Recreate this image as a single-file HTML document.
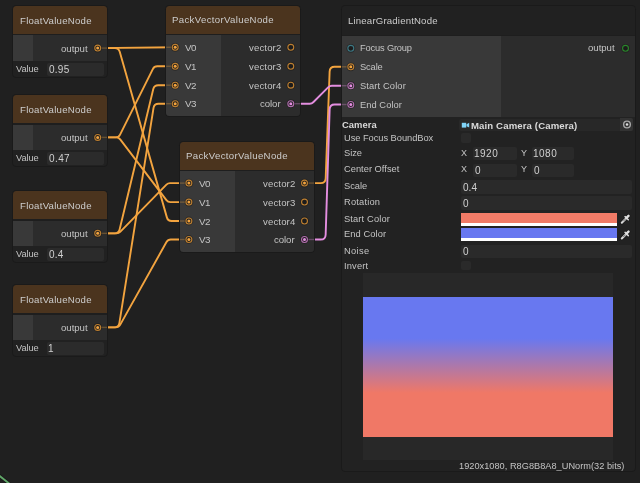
<!DOCTYPE html>
<html><head><meta charset="utf-8"><style>*{margin:0;padding:0;box-sizing:border-box}
html,body{width:640px;height:483px;overflow:hidden;background:#202020;font-family:"Liberation Sans",sans-serif;color:#c4c4c4}
.a{position:absolute}
.node{position:absolute;border-radius:3.5px;overflow:hidden;background:#232323;box-shadow:0 0 0 1px #1a1a1a}
.hdr{position:absolute;left:0;right:0;top:0;background:#4b341e}
.t{position:absolute;font-size:10px;line-height:12px;white-space:nowrap;color:#c8c8c8;will-change:transform}
.fld{position:absolute;background:#2a2a2a;border-radius:2px}
svg{position:absolute;left:0;top:0}
</style></head><body>
<svg width="640" height="483"><g fill="none" stroke-width="1.9"><path d="M97.70 48.10 L175.20 47.30" stroke="#f3a43f"/><path d="M97.70 48.10 L114.92 48.10 Q118.70 48.10 119.73 51.73 L166.87 217.37 Q167.90 221.00 171.68 221.00 L188.90 221.00" stroke="#f3a43f"/><path d="M97.70 137.40 L115.61 137.40 Q118.70 137.40 120.08 134.63 L152.82 69.07 Q154.20 66.30 157.29 66.30 L175.20 66.30" stroke="#f3a43f"/><path d="M97.70 137.40 L116.22 137.40 Q118.70 137.40 120.20 139.37 L166.40 200.13 Q167.90 202.10 170.38 202.10 L188.90 202.10" stroke="#f3a43f"/><path d="M97.70 233.35 L114.76 233.35 Q118.70 233.35 119.62 229.52 L153.28 89.03 Q154.20 85.20 158.14 85.20 L175.20 85.20" stroke="#f3a43f"/><path d="M97.70 233.35 L116.60 233.35 Q118.70 233.35 120.17 231.85 L166.43 184.60 Q167.90 183.10 170.00 183.10 L188.90 183.10" stroke="#f3a43f"/><path d="M97.70 327.40 L114.43 327.40 Q118.70 327.40 119.37 323.18 L153.53 107.92 Q154.20 103.70 158.47 103.70 L175.20 103.70" stroke="#f3a43f"/><path d="M97.70 327.40 L115.77 327.40 Q118.70 327.40 120.13 324.84 L166.47 242.06 Q167.90 239.50 170.83 239.50 L188.90 239.50" stroke="#f3a43f"/><path d="M304.50 183.10 L320.68 183.10 Q325.50 183.10 325.68 178.28 L329.62 71.62 Q329.80 66.80 334.62 66.80 L350.80 66.80" stroke="#f3a43f"/><path d="M290.80 103.70 L309.73 103.70 Q311.80 103.70 313.26 102.24 L328.34 87.16 Q329.80 85.70 331.87 85.70 L350.80 85.70" stroke="#e48ee0"/><path d="M304.50 239.50 L320.66 239.50 Q325.50 239.50 325.65 234.66 L329.65 109.34 Q329.80 104.50 334.64 104.50 L350.80 104.50" stroke="#e48ee0"/></g></svg>
<div class="node" style="left:12.8px;top:6.10px;width:94.20px;height:70.70px;background:#212121"><div class="hdr" style="height:27.80px"></div><div class="a" style="left:0;top:27.80px;right:0;height:1.4px;background:#1e1e1e"></div><div class="a" style="left:0;top:29.20px;width:20.3px;height:25.6px;background:#393939"></div><div class="a" style="left:20.3px;top:29.20px;right:0;height:25.6px;background:#2c2c2c"></div></div><div class="fld" style="left:46.90px;top:62.70px;width:56.90px;height:13.10px;background:#2b2b2b"></div><div class="node" style="left:12.8px;top:95.40px;width:94.20px;height:70.70px;background:#212121"><div class="hdr" style="height:27.80px"></div><div class="a" style="left:0;top:27.80px;right:0;height:1.4px;background:#1e1e1e"></div><div class="a" style="left:0;top:29.20px;width:20.3px;height:25.6px;background:#393939"></div><div class="a" style="left:20.3px;top:29.20px;right:0;height:25.6px;background:#2c2c2c"></div></div><div class="fld" style="left:46.90px;top:152.00px;width:56.90px;height:13.10px;background:#2b2b2b"></div><div class="node" style="left:12.8px;top:191.35px;width:94.20px;height:70.70px;background:#212121"><div class="hdr" style="height:27.80px"></div><div class="a" style="left:0;top:27.80px;right:0;height:1.4px;background:#1e1e1e"></div><div class="a" style="left:0;top:29.20px;width:20.3px;height:25.6px;background:#393939"></div><div class="a" style="left:20.3px;top:29.20px;right:0;height:25.6px;background:#2c2c2c"></div></div><div class="fld" style="left:46.90px;top:247.95px;width:56.90px;height:13.10px;background:#2b2b2b"></div><div class="node" style="left:12.8px;top:285.40px;width:94.20px;height:70.70px;background:#212121"><div class="hdr" style="height:27.80px"></div><div class="a" style="left:0;top:27.80px;right:0;height:1.4px;background:#1e1e1e"></div><div class="a" style="left:0;top:29.20px;width:20.3px;height:25.6px;background:#393939"></div><div class="a" style="left:20.3px;top:29.20px;right:0;height:25.6px;background:#2c2c2c"></div></div><div class="fld" style="left:46.90px;top:342.00px;width:56.90px;height:13.10px;background:#2b2b2b"></div><div class="node" style="left:166.2px;top:6.20px;width:134.3px;height:109.50px"><div class="hdr" style="height:27.70px"></div><div class="a" style="left:0;top:27.70px;right:0;height:1.2px;background:#1e1e1e"></div><div class="a" style="left:0;top:28.90px;width:55.3px;bottom:0;background:#393939"></div><div class="a" style="left:55.3px;top:28.90px;right:0;bottom:0;background:#2c2c2c"></div></div><div class="node" style="left:179.9px;top:142.00px;width:134.3px;height:109.50px"><div class="hdr" style="height:27.70px"></div><div class="a" style="left:0;top:27.70px;right:0;height:1.2px;background:#1e1e1e"></div><div class="a" style="left:0;top:28.90px;width:55.3px;bottom:0;background:#393939"></div><div class="a" style="left:55.3px;top:28.90px;right:0;bottom:0;background:#2c2c2c"></div></div>
<div class="node" style="left:341.6px;top:6.2px;width:293.60px;height:464.80px;background:#222222"><div class="a" style="left:0;top:0;right:0;height:28.9px;background:#212121"></div><div class="a" style="left:0;top:28.9px;right:0;height:0.8px;background:#1e1e1e"></div><div class="a" style="left:0;top:29.7px;width:159.10px;height:81.3px;background:#393939"></div><div class="a" style="left:159.10px;top:29.7px;right:0;height:81.3px;background:#2c2c2c"></div></div><div class="fld" style="left:459.00px;top:118.60px;width:174.40px;height:12.30px;background:#282828"></div><div class="a" style="left:619.6px;top:118.2px;width:13.9px;height:12.6px;background:#333333;border-radius:0 2px 2px 0"></div><svg width="640" height="483"><circle cx="627" cy="124.5" r="3.35" fill="none" stroke="#a8a8a8" stroke-width="1.4"/><circle cx="627" cy="124.5" r="1.25" fill="#e0e0e0"/></svg><svg width="640" height="483"><rect x="461.8" y="122.8" width="4.4" height="4.8" fill="#80d4f8"/><path d="M466.5 124.3 L469.2 122.8 L469.2 127.6 L466.5 126.2 Z" fill="#80d4f8"/></svg><div class="a" style="left:461.10px;top:133.20px;width:10.10px;height:9.40px;background:#2a2a2a;border-radius:2px"></div><div class="fld" style="left:473.20px;top:146.80px;width:43.50px;height:13.30px;background:#2a2a2a"></div><div class="fld" style="left:532.20px;top:146.80px;width:41.80px;height:13.30px;background:#2a2a2a"></div><div class="fld" style="left:473.20px;top:164.20px;width:43.50px;height:12.80px;background:#2a2a2a"></div><div class="fld" style="left:532.20px;top:164.20px;width:41.80px;height:12.80px;background:#2a2a2a"></div><div class="fld" style="left:461.20px;top:180.20px;width:170.80px;height:14.00px;background:#2a2a2a"></div><div class="fld" style="left:461.20px;top:195.70px;width:170.80px;height:14.00px;background:#2a2a2a"></div><div class="a" style="left:460.80px;top:212.90px;width:156.50px;height:10.10px;background:#f07a66;"></div><div class="a" style="left:460.80px;top:223.00px;width:156.50px;height:2.70px;background:#ffffff;"></div><div class="a" style="left:460.80px;top:228.40px;width:156.50px;height:9.70px;background:#6878f0;"></div><div class="a" style="left:460.80px;top:238.10px;width:156.50px;height:3.10px;background:#ffffff;"></div><div class="fld" style="left:461.20px;top:245.00px;width:170.80px;height:12.80px;background:#2a2a2a"></div><div class="a" style="left:461.20px;top:261.00px;width:9.90px;height:9.20px;background:#2a2a2a;border-radius:2px"></div><svg width="640" height="483"><g stroke-linecap="round" fill="none"><path d="M621.8 222.70 L626.0 218.50" stroke="#111" stroke-opacity="0.6" stroke-width="3.4"/><path d="M625.1 216.60 L628.3 219.80" stroke="#111" stroke-opacity="0.6" stroke-width="2.8"/><path d="M626.7 217.60 L628.5 215.90" stroke="#111" stroke-opacity="0.6" stroke-width="3.6"/><path d="M621.8 222.70 L626.0 218.50" stroke="#d8d8d8" stroke-width="2.1"/><path d="M623.6 220.90 L625.4 219.10" stroke="#3a3a3a" stroke-width="0.7"/><path d="M625.1 216.60 L628.3 219.80" stroke="#d8d8d8" stroke-width="1.6"/><path d="M626.7 217.60 L628.5 215.90" stroke="#e0e0e0" stroke-width="2.5"/></g></svg><svg width="640" height="483"><g stroke-linecap="round" fill="none"><path d="M621.8 238.50 L626.0 234.30" stroke="#111" stroke-opacity="0.6" stroke-width="3.4"/><path d="M625.1 232.40 L628.3 235.60" stroke="#111" stroke-opacity="0.6" stroke-width="2.8"/><path d="M626.7 233.40 L628.5 231.70" stroke="#111" stroke-opacity="0.6" stroke-width="3.6"/><path d="M621.8 238.50 L626.0 234.30" stroke="#d8d8d8" stroke-width="2.1"/><path d="M623.6 236.70 L625.4 234.90" stroke="#3a3a3a" stroke-width="0.7"/><path d="M625.1 232.40 L628.3 235.60" stroke="#d8d8d8" stroke-width="1.6"/><path d="M626.7 233.40 L628.5 231.70" stroke="#e0e0e0" stroke-width="2.5"/></g></svg><div class="a" style="left:363.20px;top:273.25px;width:249.80px;height:186.95px;background:#282828;"></div><div class="a" style="left:363.2px;top:296.6px;width:249.8px;height:140.2px;background:linear-gradient(to bottom,#6878f0 0%,#6878f0 29.5%,#f07866 68.5%,#f07866 100%)"></div>
<div class="t" style="left:20.00px;top:15px;font-size:9.6px;color:#cdcdcd;letter-spacing:0.265px;">FloatValueNode</div><div class="t" style="left:60.50px;top:43px;font-size:9.6px;color:#c4c4c4;letter-spacing:-0.02px;">output</div><div class="t" style="left:16.00px;top:63px;font-size:9.3px;color:#c4c4c4;letter-spacing:-0.075px;">Value</div><div class="t" style="left:48.90px;top:64px;font-size:10px;color:#d0d0d0;letter-spacing:0.267px;">0.95</div><div class="t" style="left:20.00px;top:104px;font-size:9.6px;color:#cdcdcd;letter-spacing:0.265px;">FloatValueNode</div><div class="t" style="left:60.50px;top:132px;font-size:9.6px;color:#c4c4c4;letter-spacing:-0.02px;">output</div><div class="t" style="left:16.00px;top:152px;font-size:9.3px;color:#c4c4c4;letter-spacing:-0.075px;">Value</div><div class="t" style="left:48.90px;top:153px;font-size:10px;color:#d0d0d0;letter-spacing:0.4px;">0.47</div><div class="t" style="left:20.00px;top:200px;font-size:9.6px;color:#cdcdcd;letter-spacing:0.265px;">FloatValueNode</div><div class="t" style="left:60.50px;top:228px;font-size:9.6px;color:#c4c4c4;letter-spacing:-0.02px;">output</div><div class="t" style="left:16.00px;top:248px;font-size:9.3px;color:#c4c4c4;letter-spacing:-0.075px;">Value</div><div class="t" style="left:48.90px;top:249px;font-size:10px;color:#d0d0d0;letter-spacing:0.2px;">0.4</div><div class="t" style="left:20.00px;top:294px;font-size:9.6px;color:#cdcdcd;letter-spacing:0.265px;">FloatValueNode</div><div class="t" style="left:60.50px;top:322px;font-size:9.6px;color:#c4c4c4;letter-spacing:-0.02px;">output</div><div class="t" style="left:16.00px;top:342px;font-size:9.3px;color:#c4c4c4;letter-spacing:-0.075px;">Value</div><div class="t" style="left:47.90px;top:343px;font-size:10px;color:#d0d0d0;">1</div><div class="t" style="left:172.10px;top:14px;font-size:9.6px;color:#cdcdcd;letter-spacing:0.35px;">PackVectorValueNode</div><div class="t" style="left:184.80px;top:42px;font-size:9.8px;color:#c4c4c4;letter-spacing:-0.6px;">V0</div><div class="t" style="left:184.80px;top:61px;font-size:9.8px;color:#c4c4c4;letter-spacing:-0.6px;">V1</div><div class="t" style="left:184.80px;top:80px;font-size:9.8px;color:#c4c4c4;letter-spacing:-0.6px;">V2</div><div class="t" style="left:184.80px;top:98px;font-size:9.8px;color:#c4c4c4;letter-spacing:-0.6px;">V3</div><div class="t" style="left:248.90px;top:42px;font-size:9.6px;color:#c4c4c4;letter-spacing:0.133px;">vector2</div><div class="t" style="left:248.90px;top:61px;font-size:9.6px;color:#c4c4c4;letter-spacing:0.133px;">vector3</div><div class="t" style="left:248.90px;top:80px;font-size:9.6px;color:#c4c4c4;letter-spacing:0.133px;">vector4</div><div class="t" style="left:259.90px;top:98px;font-size:9.6px;color:#c4c4c4;letter-spacing:-0.05px;">color</div><div class="t" style="left:185.80px;top:150px;font-size:9.6px;color:#cdcdcd;letter-spacing:0.35px;">PackVectorValueNode</div><div class="t" style="left:198.50px;top:178px;font-size:9.8px;color:#c4c4c4;letter-spacing:-0.6px;">V0</div><div class="t" style="left:198.50px;top:197px;font-size:9.8px;color:#c4c4c4;letter-spacing:-0.6px;">V1</div><div class="t" style="left:198.50px;top:216px;font-size:9.8px;color:#c4c4c4;letter-spacing:-0.6px;">V2</div><div class="t" style="left:198.50px;top:234px;font-size:9.8px;color:#c4c4c4;letter-spacing:-0.6px;">V3</div><div class="t" style="left:262.60px;top:178px;font-size:9.6px;color:#c4c4c4;letter-spacing:0.133px;">vector2</div><div class="t" style="left:262.60px;top:197px;font-size:9.6px;color:#c4c4c4;letter-spacing:0.133px;">vector3</div><div class="t" style="left:262.60px;top:216px;font-size:9.6px;color:#c4c4c4;letter-spacing:0.133px;">vector4</div><div class="t" style="left:273.60px;top:234px;font-size:9.6px;color:#c4c4c4;letter-spacing:-0.05px;">color</div><div class="t" style="left:348.30px;top:15px;font-size:9.6px;color:#cdcdcd;letter-spacing:0.182px;">LinearGradientNode</div><div class="t" style="left:360.40px;top:42px;font-size:9.3px;color:#c4c4c4;letter-spacing:-0.17px;">Focus Group</div><div class="t" style="left:360.30px;top:61px;font-size:9.3px;color:#c4c4c4;letter-spacing:-0.125px;">Scale</div><div class="t" style="left:360.30px;top:80px;font-size:9.3px;color:#c4c4c4;letter-spacing:0.13px;">Start Color</div><div class="t" style="left:360.30px;top:99px;font-size:9.3px;color:#c4c4c4;letter-spacing:0.062px;">End Color</div><div class="t" style="left:588.30px;top:42px;font-size:9.6px;color:#c4c4c4;letter-spacing:-0.02px;">output</div><div class="t" style="left:342.20px;top:119px;font-size:9.4px;color:#dadada;font-weight:bold;letter-spacing:0.05px;">Camera</div><div class="t" style="left:470.60px;top:120px;font-size:9.6px;color:#dadada;font-weight:bold;letter-spacing:0.121px;">Main Camera (Camera)</div><div class="t" style="left:344.40px;top:132px;font-size:9.3px;color:#c4c4c4;letter-spacing:-0.041px;">Use Focus BoundBox</div><div class="t" style="left:344.40px;top:147px;font-size:9.3px;color:#c4c4c4;letter-spacing:-0.067px;">Size</div><div class="t" style="left:344.40px;top:163px;font-size:9.3px;color:#c4c4c4;letter-spacing:0.017px;">Center Offset</div><div class="t" style="left:344.40px;top:180px;font-size:9.3px;color:#c4c4c4;letter-spacing:-0.025px;">Scale</div><div class="t" style="left:344.40px;top:196px;font-size:9.3px;color:#c4c4c4;letter-spacing:0.2px;">Rotation</div><div class="t" style="left:344.40px;top:213px;font-size:9.3px;color:#c4c4c4;letter-spacing:0.14px;">Start Color</div><div class="t" style="left:344.40px;top:228px;font-size:9.3px;color:#c4c4c4;letter-spacing:0.1px;">End Color</div><div class="t" style="left:344.40px;top:245px;font-size:9.3px;color:#c4c4c4;letter-spacing:0.325px;">Noise</div><div class="t" style="left:344.10px;top:260px;font-size:9.3px;color:#c4c4c4;letter-spacing:0.18px;">Invert</div><div class="t" style="left:461.20px;top:147px;font-size:9.0px;color:#c4c4c4;">X</div><div class="t" style="left:521.40px;top:147px;font-size:9.0px;color:#c4c4c4;">Y</div><div class="t" style="left:461.20px;top:163px;font-size:9.0px;color:#c4c4c4;">X</div><div class="t" style="left:521.40px;top:163px;font-size:9.0px;color:#c4c4c4;">Y</div><div class="t" style="left:473.60px;top:148px;font-size:10px;color:#d0d0d0;letter-spacing:0.5px;">1920</div><div class="t" style="left:533.30px;top:148px;font-size:10px;color:#d0d0d0;letter-spacing:0.5px;">1080</div><div class="t" style="left:474.60px;top:165px;font-size:10px;color:#d0d0d0;">0</div><div class="t" style="left:534.30px;top:165px;font-size:10px;color:#d0d0d0;">0</div><div class="t" style="left:463.00px;top:182px;font-size:10px;color:#d0d0d0;letter-spacing:0.05px;">0.4</div><div class="t" style="left:463.00px;top:198px;font-size:10px;color:#d0d0d0;">0</div><div class="t" style="left:463.00px;top:246px;font-size:10px;color:#d0d0d0;">0</div><div class="t" style="left:458.90px;top:460px;font-size:9.2px;color:#c4c4c4;letter-spacing:0.03px;">1920x1080, R8G8B8A8_UNorm(32 bits)</div>
<svg width="640" height="483"><line x1="101.20" y1="48.10" x2="107.00" y2="48.10" stroke="#f3a43f" stroke-opacity="0.3" stroke-width="1.4"/><line x1="101.20" y1="137.40" x2="107.00" y2="137.40" stroke="#f3a43f" stroke-opacity="0.3" stroke-width="1.4"/><line x1="101.20" y1="233.35" x2="107.00" y2="233.35" stroke="#f3a43f" stroke-opacity="0.3" stroke-width="1.4"/><line x1="101.20" y1="327.40" x2="107.00" y2="327.40" stroke="#f3a43f" stroke-opacity="0.3" stroke-width="1.4"/><line x1="166.20" y1="47.30" x2="171.70" y2="47.30" stroke="#f3a43f" stroke-opacity="0.3" stroke-width="1.4"/><line x1="166.20" y1="66.30" x2="171.70" y2="66.30" stroke="#f3a43f" stroke-opacity="0.3" stroke-width="1.4"/><line x1="166.20" y1="85.20" x2="171.70" y2="85.20" stroke="#f3a43f" stroke-opacity="0.3" stroke-width="1.4"/><line x1="166.20" y1="103.70" x2="171.70" y2="103.70" stroke="#f3a43f" stroke-opacity="0.3" stroke-width="1.4"/><line x1="294.30" y1="103.70" x2="300.50" y2="103.70" stroke="#e48ee0" stroke-opacity="0.3" stroke-width="1.4"/><line x1="179.90" y1="183.10" x2="185.40" y2="183.10" stroke="#f3a43f" stroke-opacity="0.3" stroke-width="1.4"/><line x1="179.90" y1="202.10" x2="185.40" y2="202.10" stroke="#f3a43f" stroke-opacity="0.3" stroke-width="1.4"/><line x1="179.90" y1="221.00" x2="185.40" y2="221.00" stroke="#f3a43f" stroke-opacity="0.3" stroke-width="1.4"/><line x1="179.90" y1="239.50" x2="185.40" y2="239.50" stroke="#f3a43f" stroke-opacity="0.3" stroke-width="1.4"/><line x1="308.00" y1="183.10" x2="314.20" y2="183.10" stroke="#f3a43f" stroke-opacity="0.3" stroke-width="1.4"/><line x1="308.00" y1="239.50" x2="314.20" y2="239.50" stroke="#e48ee0" stroke-opacity="0.3" stroke-width="1.4"/><line x1="341.60" y1="66.80" x2="347.30" y2="66.80" stroke="#f3a43f" stroke-opacity="0.3" stroke-width="1.4"/><line x1="341.60" y1="85.70" x2="347.30" y2="85.70" stroke="#e48ee0" stroke-opacity="0.3" stroke-width="1.4"/><line x1="341.60" y1="104.50" x2="347.30" y2="104.50" stroke="#e48ee0" stroke-opacity="0.3" stroke-width="1.4"/><circle cx="97.70" cy="48.10" r="4.4" fill="#161616" fill-opacity="0.45"/><circle cx="97.70" cy="48.10" r="2.95" fill="#1c1c1c" stroke="#bd7f31" stroke-width="1.1"/><circle cx="97.70" cy="48.10" r="1.5" fill="#f3a43f"/><circle cx="97.70" cy="137.40" r="4.4" fill="#161616" fill-opacity="0.45"/><circle cx="97.70" cy="137.40" r="2.95" fill="#1c1c1c" stroke="#bd7f31" stroke-width="1.1"/><circle cx="97.70" cy="137.40" r="1.5" fill="#f3a43f"/><circle cx="97.70" cy="233.35" r="4.4" fill="#161616" fill-opacity="0.45"/><circle cx="97.70" cy="233.35" r="2.95" fill="#1c1c1c" stroke="#bd7f31" stroke-width="1.1"/><circle cx="97.70" cy="233.35" r="1.5" fill="#f3a43f"/><circle cx="97.70" cy="327.40" r="4.4" fill="#161616" fill-opacity="0.45"/><circle cx="97.70" cy="327.40" r="2.95" fill="#1c1c1c" stroke="#bd7f31" stroke-width="1.1"/><circle cx="97.70" cy="327.40" r="1.5" fill="#f3a43f"/><circle cx="175.20" cy="47.30" r="4.4" fill="#161616" fill-opacity="0.45"/><circle cx="175.20" cy="47.30" r="2.95" fill="#1c1c1c" stroke="#bd7f31" stroke-width="1.1"/><circle cx="175.20" cy="47.30" r="1.5" fill="#f3a43f"/><circle cx="175.20" cy="66.30" r="4.4" fill="#161616" fill-opacity="0.45"/><circle cx="175.20" cy="66.30" r="2.95" fill="#1c1c1c" stroke="#bd7f31" stroke-width="1.1"/><circle cx="175.20" cy="66.30" r="1.5" fill="#f3a43f"/><circle cx="175.20" cy="85.20" r="4.4" fill="#161616" fill-opacity="0.45"/><circle cx="175.20" cy="85.20" r="2.95" fill="#1c1c1c" stroke="#bd7f31" stroke-width="1.1"/><circle cx="175.20" cy="85.20" r="1.5" fill="#f3a43f"/><circle cx="175.20" cy="103.70" r="4.4" fill="#161616" fill-opacity="0.45"/><circle cx="175.20" cy="103.70" r="2.95" fill="#1c1c1c" stroke="#bd7f31" stroke-width="1.1"/><circle cx="175.20" cy="103.70" r="1.5" fill="#f3a43f"/><circle cx="290.80" cy="47.30" r="4.4" fill="#161616" fill-opacity="0.45"/><circle cx="290.80" cy="47.30" r="2.95" fill="#1c1c1c" stroke="#bd7f31" stroke-width="1.1"/><circle cx="290.80" cy="66.30" r="4.4" fill="#161616" fill-opacity="0.45"/><circle cx="290.80" cy="66.30" r="2.95" fill="#1c1c1c" stroke="#bd7f31" stroke-width="1.1"/><circle cx="290.80" cy="85.20" r="4.4" fill="#161616" fill-opacity="0.45"/><circle cx="290.80" cy="85.20" r="2.95" fill="#1c1c1c" stroke="#bd7f31" stroke-width="1.1"/><circle cx="290.80" cy="103.70" r="4.4" fill="#161616" fill-opacity="0.45"/><circle cx="290.80" cy="103.70" r="2.95" fill="#1c1c1c" stroke="#b16eae" stroke-width="1.1"/><circle cx="290.80" cy="103.70" r="1.5" fill="#e48ee0"/><circle cx="188.90" cy="183.10" r="4.4" fill="#161616" fill-opacity="0.45"/><circle cx="188.90" cy="183.10" r="2.95" fill="#1c1c1c" stroke="#bd7f31" stroke-width="1.1"/><circle cx="188.90" cy="183.10" r="1.5" fill="#f3a43f"/><circle cx="188.90" cy="202.10" r="4.4" fill="#161616" fill-opacity="0.45"/><circle cx="188.90" cy="202.10" r="2.95" fill="#1c1c1c" stroke="#bd7f31" stroke-width="1.1"/><circle cx="188.90" cy="202.10" r="1.5" fill="#f3a43f"/><circle cx="188.90" cy="221.00" r="4.4" fill="#161616" fill-opacity="0.45"/><circle cx="188.90" cy="221.00" r="2.95" fill="#1c1c1c" stroke="#bd7f31" stroke-width="1.1"/><circle cx="188.90" cy="221.00" r="1.5" fill="#f3a43f"/><circle cx="188.90" cy="239.50" r="4.4" fill="#161616" fill-opacity="0.45"/><circle cx="188.90" cy="239.50" r="2.95" fill="#1c1c1c" stroke="#bd7f31" stroke-width="1.1"/><circle cx="188.90" cy="239.50" r="1.5" fill="#f3a43f"/><circle cx="304.50" cy="183.10" r="4.4" fill="#161616" fill-opacity="0.45"/><circle cx="304.50" cy="183.10" r="2.95" fill="#1c1c1c" stroke="#bd7f31" stroke-width="1.1"/><circle cx="304.50" cy="183.10" r="1.5" fill="#f3a43f"/><circle cx="304.50" cy="202.10" r="4.4" fill="#161616" fill-opacity="0.45"/><circle cx="304.50" cy="202.10" r="2.95" fill="#1c1c1c" stroke="#bd7f31" stroke-width="1.1"/><circle cx="304.50" cy="221.00" r="4.4" fill="#161616" fill-opacity="0.45"/><circle cx="304.50" cy="221.00" r="2.95" fill="#1c1c1c" stroke="#bd7f31" stroke-width="1.1"/><circle cx="304.50" cy="239.50" r="4.4" fill="#161616" fill-opacity="0.45"/><circle cx="304.50" cy="239.50" r="2.95" fill="#1c1c1c" stroke="#b16eae" stroke-width="1.1"/><circle cx="304.50" cy="239.50" r="1.5" fill="#e48ee0"/><circle cx="350.80" cy="48.30" r="4.4" fill="#161616" fill-opacity="0.45"/><circle cx="350.80" cy="48.30" r="2.95" fill="#1c1c1c" stroke="#3d7884" stroke-width="1.1"/><circle cx="350.80" cy="66.80" r="4.4" fill="#161616" fill-opacity="0.45"/><circle cx="350.80" cy="66.80" r="2.95" fill="#1c1c1c" stroke="#bd7f31" stroke-width="1.1"/><circle cx="350.80" cy="66.80" r="1.5" fill="#f3a43f"/><circle cx="350.80" cy="85.70" r="4.4" fill="#161616" fill-opacity="0.45"/><circle cx="350.80" cy="85.70" r="2.95" fill="#1c1c1c" stroke="#b16eae" stroke-width="1.1"/><circle cx="350.80" cy="85.70" r="1.5" fill="#e48ee0"/><circle cx="350.80" cy="104.50" r="4.4" fill="#161616" fill-opacity="0.45"/><circle cx="350.80" cy="104.50" r="2.95" fill="#1c1c1c" stroke="#b16eae" stroke-width="1.1"/><circle cx="350.80" cy="104.50" r="1.5" fill="#e48ee0"/><circle cx="625.50" cy="48.30" r="4.4" fill="#161616" fill-opacity="0.45"/><circle cx="625.50" cy="48.30" r="2.95" fill="#1c1c1c" stroke="#2a862b" stroke-width="1.1"/></svg>
<svg width="640" height="483"><path d="M-1 475.5 L9.5 483.8" stroke="#141414" stroke-width="3.6" stroke-opacity="0.6"/><path d="M-1 475.5 L9.5 483.8" stroke="#62a86a" stroke-width="1.9"/></svg>
</body></html>
